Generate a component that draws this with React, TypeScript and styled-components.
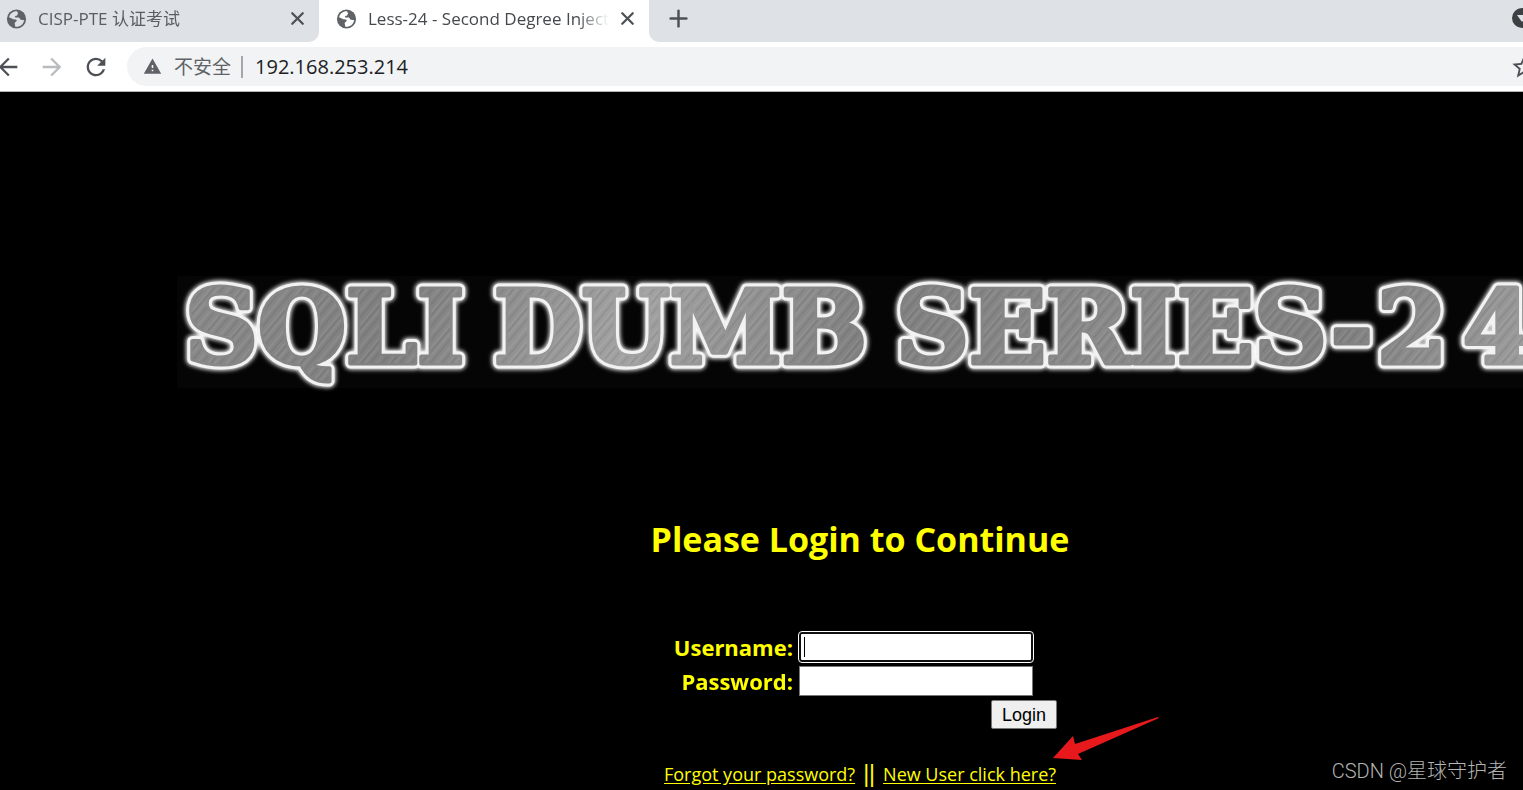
import React from 'react';
import styled, { createGlobalStyle } from 'styled-components';
import { Plus, X } from 'lucide-react';
import { MdArrowBack, MdArrowForward, MdRefresh, MdStarBorder, MdWarning } from 'react-icons/md';

const GlobalStyle = createGlobalStyle`
  * { box-sizing: border-box; }
  body {
    margin: 0;
    background: #000;
    font-family: "Open Sans", "Noto Sans CJK SC", sans-serif;
  }
  button { font: inherit; cursor: pointer; }
`;

const Window = styled.div`
  position: relative;
  display: flex;
  flex-direction: column;
  min-height: 100vh;
  overflow: hidden;
`;

const TabStrip = styled.nav`
  display: flex;
  align-items: stretch;
  height: 42px;
  background: #fff;
`;

const Tab = styled.div<{ $active?: boolean }>`
  display: flex;
  align-items: center;
  width: ${(p) => (p.$active ? 330 : 319)}px;
  flex-shrink: 0;
  padding: 0 11px 5px ${(p) => (p.$active ? 15 : 4)}px;
  color: ${(p) => (p.$active ? '#45494d' : '#5a5e63')};
  background: ${(p) => (p.$active ? '#fff' : '#dee1e6')};
  border-radius: ${(p) => (p.$active ? '10px 10px 0 0' : '0 0 10px 0')};
`;

const TabTitle = styled.a`
  flex: 1;
  min-width: 0;
  margin: 0 8px 0 9px;
  overflow: hidden;
  white-space: nowrap;
  font-size: 17px;
  line-height: 24px;
  color: inherit;
  text-decoration: none;
  mask-image: linear-gradient(to right, #000 calc(100% - 32px), transparent);
`;

const IconButton = styled.button<{ $muted?: boolean }>`
  display: flex;
  flex-shrink: 0;
  padding: 0;
  border: 0;
  background: none;
  color: ${(p) => (p.$muted ? '#b9bbbe' : '#4d5156')};
`;

const StripRest = styled.div`
  display: flex;
  flex: 1;
  align-items: center;
  justify-content: space-between;
  padding: 0 0 6px 16px;
  margin-right: -9px;
  background: #dee1e6;
  border-radius: 0 0 0 10px;
`;

const Toolbar = styled.header`
  display: flex;
  align-items: center;
  gap: 18px;
  height: 50px;
  border-bottom: 1px solid #b5b5b5;
  background: #fff;
  overflow: hidden;
`;

const NavButtons = styled.div`
  display: flex;
  gap: 16px;
  margin-left: -6px;
`;

const AddressBar = styled.div`
  display: flex;
  flex: 1;
  align-items: center;
  height: 39px;
  margin: 0 -29px 0 -1px;
  padding: 0 14px 0 16px;
  border-radius: 20px;
  background: #f1f3f4;
  color: #5f6368;
`;

const Insecure = styled.span`
  margin-left: 12px;
  padding-right: 10px;
  border-right: 2px solid #a5a8ab;
  font-size: 19px;
  line-height: 22px;
`;

const Address = styled.input`
  flex: 1;
  min-width: 0;
  margin-left: 12px;
  padding: 0;
  border: 0;
  outline: 0;
  background: none;
  font: 20px/28px "Open Sans", sans-serif;
  color: #202124;
`;

const Page = styled.main`
  flex: 1;
  padding: 184px 0 0 177px;
  background: #000;
  color: #ff0;
`;

const Banner = styled.svg`
  display: block;
  width: 1400px;
  height: 112px;
  overflow: visible;
  background: #050505;
`;

const Login = styled.section`
  display: flex;
  flex-direction: column;
  align-items: center;
  padding: 126px 0 0 20px;
`;

const Title = styled.h1`
  margin: 0;
  font-size: 34px;
  font-weight: 700;
  line-height: 50px;
`;

const Form = styled.form`
  display: grid;
  grid-template-columns: 130px 234px 18px;
  column-gap: 6px;
  row-gap: 4px;
  margin-top: 68px;
`;

const Label = styled.label`
  justify-self: end;
  font-size: 22px;
  font-weight: 700;
  line-height: 30px;
`;

const Field = styled.input`
  height: 30px;
  padding: 2px 5px;
  border: 1px solid #767676;
  background: #fff;
  font: 18px/24px "Liberation Sans", sans-serif;
  color: #000;

  &:focus {
    border: 2px solid #101010;
    border-radius: 3px;
    outline: 1px solid #fff;
    outline-offset: 0;
  }

  &:focus:placeholder-shown {
    background: linear-gradient(#000, #000) 3px center / 1px 20px no-repeat #fff;
    caret-color: transparent;
  }
`;

const Submit = styled.button`
  grid-column: 1 / -1;
  justify-self: end;
  width: 66px;
  height: 29px;
  padding: 0;
  border: 1px solid #767676;
  border-radius: 2px;
  background: #efefef;
  font-family: "Liberation Sans", sans-serif;
  font-size: 18px;
  line-height: 24px;
  color: #000;
`;

const Links = styled.div`
  position: relative;
  display: flex;
  align-items: center;
  gap: 8px;
  margin-top: 30px;
  font-size: 18px;
  line-height: 30px;
  white-space: nowrap;
`;

const PageLink = styled.a`
  color: #ff0;
  text-underline-offset: 2px;
`;

const Divider = styled.span`
  font-family: "Liberation Sans", sans-serif;
  font-size: 23px;
`;

const Arrow = styled.svg`
  position: absolute;
  left: 100%;
  bottom: 26px;
  width: 108px;
  height: 48px;
  margin-left: -4px;
`;

const Watermark = styled.span`
  position: absolute;
  right: 16px;
  bottom: 5px;
  font: 300 20px/28px Roboto, "Noto Sans CJK SC", sans-serif;
  color: #b4b4b4;
`;

const words = [
  { text: 'SQLI', x: 8 },
  { text: 'DUMB', x: 317 },
  { text: 'SERIES-', x: 719 },
  { text: '2', x: 1200 },
  { text: '4', x: 1286 },
];

function BannerWords(props: React.SVGProps<SVGTextElement>) {
  return (
    <text y="87" fontFamily="DejaVu Serif" fontWeight="700" fontSize="101" strokeLinejoin="round" {...props}>
      {words.map((w) => (
        <tspan key={w.text} x={w.x}>{w.text}</tspan>
      ))}
    </text>
  );
}

function Globe({ land }: { land: string }) {
  return (
    <svg width="25" height="24" viewBox="0 0 24 24" aria-hidden>
      <circle cx="12" cy="12" r="9.6" fill="#5f6368" />
      <path
        d="M12.5 4.2C8.5 4 5.4 6.4 4.6 10.2L8.8 12.2C10.3 12.8 11.6 12 12.2 13.2C12.7 14.4 10 15 10.2 16.6L10.8 19.7C15.4 20.2 19 17.2 19.7 13.2L16.6 12.8C15.2 12.6 15.6 10.9 14.2 10.5L10.7 10.4C10 9.7 10.8 8.9 11.8 8.8C13.2 8.6 12.6 7.2 13.6 6.4Z"
        fill={land}
      />
    </svg>
  );
}

export default function App() {
  return (
    <Window>
      <GlobalStyle />
      <TabStrip aria-label="Tabs">
        <Tab>
          <Globe land="#dee1e6" />
          <TabTitle href="#cisp">CISP-PTE 认证考试</TabTitle>
          <IconButton aria-label="Close tab"><X size={21} strokeWidth={2.6} /></IconButton>
        </Tab>
        <Tab $active>
          <Globe land="#fff" />
          <TabTitle href="#less-24">Less-24 - Second Degree Injections</TabTitle>
          <IconButton aria-label="Close tab"><X size={21} strokeWidth={2.6} /></IconButton>
        </Tab>
        <StripRest>
          <IconButton aria-label="New tab"><Plus size={27} strokeWidth={2.2} /></IconButton>
          <IconButton aria-label="Search tabs">
            <svg width="20" height="20" viewBox="0 0 20 20">
              <circle cx="10" cy="10" r="10" fill="#3c4043" />
              <path d="M5 7H15L10 14Z" fill="#dee1e6" />
            </svg>
          </IconButton>
        </StripRest>
      </TabStrip>
      <Toolbar>
        <NavButtons>
          <IconButton aria-label="Back"><MdArrowBack size={28} /></IconButton>
          <IconButton aria-label="Forward" $muted><MdArrowForward size={28} /></IconButton>
          <IconButton aria-label="Reload"><MdRefresh size={28} /></IconButton>
        </NavButtons>
        <AddressBar>
          <MdWarning size={19} />
          <Insecure>不安全</Insecure>
          <Address aria-label="Address" defaultValue="192.168.253.214" />
          <IconButton aria-label="Bookmark"><MdStarBorder size={28} /></IconButton>
        </AddressBar>
      </Toolbar>
      <Page>
        <Banner role="img" aria-label="SQLI DUMB SERIES-24">
          <defs>
            <linearGradient id="metal" x1="0" y1="0" x2="420" y2="150" gradientUnits="userSpaceOnUse" spreadMethod="reflect">
              <stop offset="0" stopColor="#8a8a8a" />
              <stop offset="0.5" stopColor="#808080" />
              <stop offset="1" stopColor="#a2a2a2" />
            </linearGradient>
            <pattern id="brush" width="23" height="23" patternUnits="userSpaceOnUse" patternTransform="rotate(-50)">
              <path d="M0 2H23M0 11H23M0 16H23" stroke="#fff" strokeOpacity=".12" />
              <path d="M0 6H23M0 13H23M0 20H23" stroke="#000" strokeOpacity=".12" />
            </pattern>
            <filter id="glow" x="-5%" y="-30%" width="110%" height="160%">
              <feGaussianBlur stdDeviation="2" />
            </filter>
          </defs>
          <BannerWords fill="#fff" stroke="#fff" strokeWidth="13" filter="url(#glow)" />
          <BannerWords fill="#f2f2f2" stroke="#f2f2f2" strokeWidth="11" aria-hidden />
          <BannerWords fill="url(#metal)" stroke="url(#metal)" strokeWidth="5" aria-hidden />
          <BannerWords fill="url(#brush)" stroke="none" aria-hidden />
        </Banner>
        <Login>
          <Title>Please Login to Continue</Title>
          <Form onSubmit={(e) => e.preventDefault()}>
            <Label htmlFor="username">Username:</Label>
            <Field id="username" placeholder=" " autoFocus />
            <span />
            <Label htmlFor="password">Password:</Label>
            <Field id="password" type="password" />
            <Submit type="submit">Login</Submit>
          </Form>
          <Links>
            <PageLink href="#forgot">Forgot your password?</PageLink>
            <Divider>||</Divider>
            <PageLink href="#new-user">New User click here?</PageLink>
            <Arrow viewBox="0 0 108 48" aria-hidden>
              <path d="M1 43L21 21L23 29L106 2L107 3L26 39L30 45Z" fill="#e8191c" />
            </Arrow>
          </Links>
        </Login>
      </Page>
      <Watermark>CSDN @星球守护者</Watermark>
    </Window>
  );
}
